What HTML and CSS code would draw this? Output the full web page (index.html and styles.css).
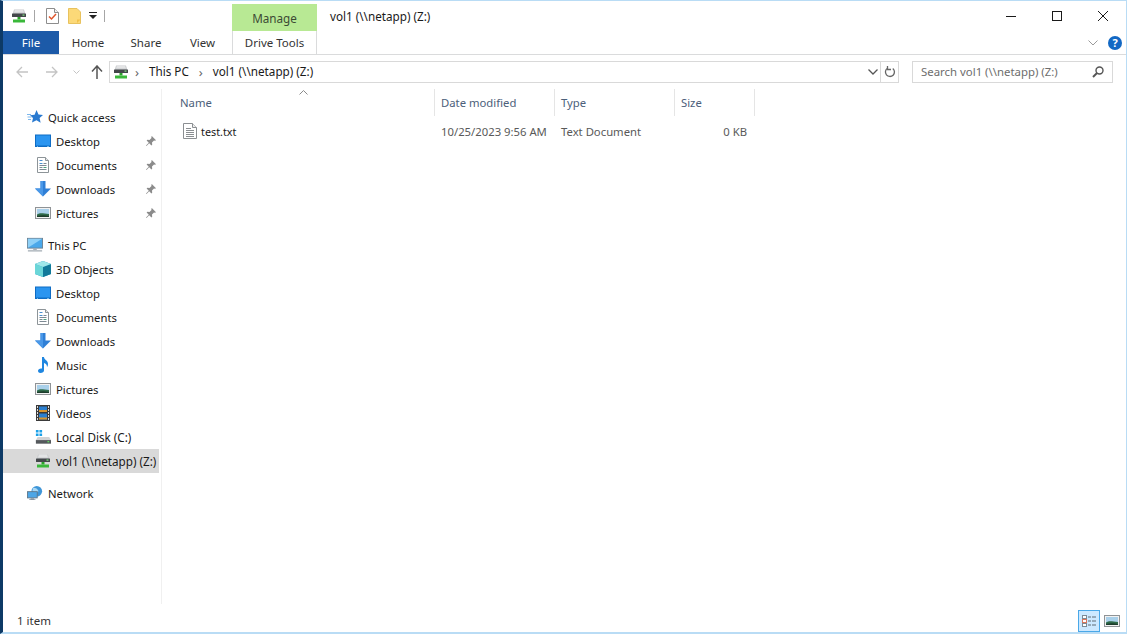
FILE: index.html
```html
<!DOCTYPE html>
<html lang="en">
<head>
<meta charset="utf-8">
<title>vol1 (\\netapp) (Z:)</title>
<link rel="stylesheet" href="styles.css">
</head>
<body>
<svg class="defs" width="0" height="0" aria-hidden="true">
  <symbol id="i-netdrive" viewBox="0 0 16 16">
    <path d="M3 1.500h10l1.500 5h-13z" fill="#c9cbcd"/>
    <path d="M4 1.500h8l1 3H3z" fill="#e3e4e5"/>
    <rect x="1" y="5.500" width="14" height="3.500" rx=".5" fill="#43474a"/>
    <rect x="11.500" y="6.500" width="2" height="1.200" fill="#7fe07f"/>
    <path d="M6.500 9h3v2.500h-3z" fill="#2aa12a"/>
    <path d="M2 11.500h12v3H2z" fill="#3ab83a"/>
  </symbol>
  <symbol id="i-desktop" viewBox="0 0 16 16">
    <rect x="0" y="1.500" width="16" height="12.500" fill="#0f6cc4"/>
    <rect x="1" y="2.500" width="14" height="10" fill="#2b95f0"/>
    <path d="M2 13h1v.6H2zm10 0h2v.6h-2z" fill="#dff"/>
  </symbol>
  <symbol id="i-doc" viewBox="0 0 16 16">
    <path d="M2.500.500h8l3 3v12h-11z" fill="#fff" stroke="#8d9498"/>
    <path d="M10.500.500v3h3" fill="#e6e8ea" stroke="#8d9498"/>
    <path d="M4.500 3.500h3M4.500 6.500h3" stroke="#4a8fce" stroke-width="1"/>
    <path d="M8.500 6.500h3M4.500 8.500h7M4.500 10.500h3M4.500 12.500h7" stroke="#7e8a94" stroke-width="1"/>
    <path d="M8.500 10.500h3" stroke="#4aa07c"/>
  </symbol>
  <symbol id="i-down" viewBox="0 0 16 16">
    <path d="M5.500 0h5v7.500H16L8 15.500 0 7.500h5.500z" fill="#2f7fd6"/>
    <path d="M5.500 0h2.500v15.500L0 7.500h5.500z" fill="#4a98e8"/>
  </symbol>
  <symbol id="i-pictures" viewBox="0 0 16 16">
    <rect x=".5" y="2.500" width="15" height="11" fill="#f2f2f2" stroke="#8f9396"/>
    <rect x="2" y="4" width="12" height="8" fill="#a9d0ea"/>
    <path d="M2 9.500c3-2 6-1 12-.5V12H2z" fill="#2f6a4a"/>
    <path d="M2 11c4-1 8-1 12 0v1H2z" fill="#1d3d2c"/>
  </symbol>
  <symbol id="i-pin" viewBox="0 0 12 12">
    <path d="M6.800 1 11 5.200l-1 .6-1-.2-2 2 .2 2.100-.8.800-2.200-2.300L1.500 11 1 10.500l2.800-2.700L1.600 5.500l.8-.8 2.100.2 2-2-.2-1z" fill="#8b8b8b"/>
  </symbol>
  <symbol id="i-star" viewBox="0 0 16 16">
    <path d="M9.500 1l2 4.600 4.500.4-3.400 3 1 4.800-4.100-2.500L5 13.500 6 9 3 6.200l4.600-.5z" fill="#2a7ad0"/>
    <path d="M0 5.500h4M.5 8h4M1 10.500h3" stroke="#7db7ec" stroke-width="1"/>
  </symbol>
  <symbol id="i-pc" viewBox="0 0 18 16">
    <rect x=".5" y=".5" width="17" height="11" fill="#4aa8ea" stroke="#6a7f90"/>
    <path d="M1 1h16L1 11z" fill="#8ed0f7"/>
    <rect x="7" y="12" width="4" height="1.500" fill="#9aa3aa"/>
    <rect x="1" y="13.500" width="16" height="2" fill="#b9c0c6"/>
  </symbol>
  <symbol id="i-3d" viewBox="0 0 16 16">
    <path d="M8 0l8 3v10l-8 3-8-3V3z" fill="#1f98b8"/>
    <path d="M0 3l8 3v10l-8-3z" fill="#6ad6d8"/>
    <path d="M8 6l8-3v10l-8 3z" fill="#127a9a"/>
    <path d="M8 0l8 3-8 3-8-3z" fill="#9fe8ea"/>
  </symbol>
  <symbol id="i-music" viewBox="0 0 16 16">
    <path d="M7 0h2c0 3 4 3 4 7 0 1.500-.5 2.500-1 3 .2-2.500-1.500-3.500-3-4v7.500C9 15 7.500 16 5.500 16S3 15 3 13.800C3 12.300 4.800 11 7 11.500z" fill="#1f86e0"/>
  </symbol>
  <symbol id="i-video" viewBox="0 0 14 16">
    <rect width="14" height="16" fill="#3a3a3a"/>
    <path d="M1 1h1v2H1zm0 3h1v2H1zm0 3h1v2H1zm0 3h1v2H1zm0 3h1v2H1zM12 1h1v2h-1zm0 3h1v2h-1zm0 3h1v2h-1zm0 3h1v2h-1zm0 3h1v2h-1z" fill="#ddd"/>
    <rect x="3" y="1.500" width="8" height="5.500" fill="#2b7fd0"/>
    <rect x="3" y="8.500" width="8" height="6" fill="#2b7fd0"/>
    <path d="M3 5h8v2H3zM3 12.500h8v2H3z" fill="#d9962e"/>
  </symbol>
  <symbol id="i-cdrive" viewBox="0 0 18 16">
    <path d="M1 0h3v3H1zm4 0h3v3H5zM1 4h3v3H1zm4 0h3v3H5z" fill="#1aa0e8"/>
    <path d="M3 8h13l2 3.500V13H1v-1.500z" fill="#d0d2d4"/>
    <rect x="1" y="11.500" width="17" height="4" fill="#55595c"/>
    <rect x="14" y="12.500" width="2" height="1.500" fill="#63d863"/>
  </symbol>
  <symbol id="i-network" viewBox="0 0 18 16">
    <circle cx="11" cy="6" r="6" fill="#3f96d8"/>
    <path d="M7 2c3 0 5 1 6 4l-3 2-4-2z" fill="#a9d8f5"/>
    <rect x=".5" y="6.500" width="11" height="7" fill="#4da6e6" stroke="#5f7688"/>
    <path d="M4 14h4v1H4zM2.500 15h7v1h-7z" fill="#8a98a4"/>
  </symbol>
  <symbol id="i-txt" viewBox="0 0 14 16">
    <path d="M.5.500h9l4 4v11H.5z" fill="#fff" stroke="#8b8f92"/>
    <path d="M9.500.500v4h4" fill="#eee" stroke="#8b8f92"/>
    <path d="M3 5.500h5M3 7.500h8M3 9.500h8M3 11.500h8M3 13.500h8" stroke="#8a8e91"/>
  </symbol>
</svg>

<div class="window">
  <header class="titlebar">
    <div class="qat">
      <svg class="ico ico-16"><use href="#i-netdrive"/></svg>
      <span class="qat-sep qat-sep-a"></span>
      <svg class="ico qat-prop" viewBox="0 0 13 16" width="13" height="16">
        <path d="M.5.500h8l4 4v11H.5z" fill="#fff" stroke="#8d8d8d"/>
        <path d="M8.500.500v4h4" fill="#f0f0f0" stroke="#8d8d8d"/>
        <path d="M3 8.500l2.500 2.500L10 6" fill="none" stroke="#e0562c" stroke-width="1.500"/>
      </svg>
      <svg class="ico qat-folder" viewBox="0 0 13 16" width="13" height="16">
        <path d="M.5.500h8.500l3.500 3.500v11.500H.5z" fill="#fcd978" stroke="#e8c25e"/>
        <path d="M9 15v-3.500h3.500" fill="#f2c24a"/>
      </svg>
      <svg class="ico qat-drop" viewBox="0 0 8 8" width="8" height="8">
        <path d="M0 0h8v1H0zM0 3h8L4 7z" fill="#222"/>
      </svg>
      <span class="qat-sep qat-sep-b"></span>
    </div>
    <div class="manage">Manage</div>
    <div class="title">vol1 (\\netapp) (Z:)</div>
    <div class="winctl">
      <button class="wbtn" aria-label="Minimize"><svg width="10" height="10" viewBox="0 0 10 10"><path d="M0 5.500h10" stroke="#1a1a1a"/></svg></button>
      <button class="wbtn" aria-label="Maximize"><svg width="10" height="10" viewBox="0 0 10 10"><rect x=".5" y=".5" width="9" height="9" fill="none" stroke="#1a1a1a"/></svg></button>
      <button class="wbtn" aria-label="Close"><svg width="10" height="10" viewBox="0 0 10 10"><path d="M0 0l10 10M10 0L0 10" stroke="#1a1a1a"/></svg></button>
    </div>
  </header>

  <nav class="tabs">
    <div class="tab tab-file">File</div>
    <div class="tab tab-home">Home</div>
    <div class="tab tab-share">Share</div>
    <div class="tab tab-view">View</div>
    <div class="tab tab-drive">Drive Tools</div>
    <div class="tabs-right">
      <svg width="10" height="6" viewBox="0 0 10 6"><path d="M.5.500L5 5 9.500.500" fill="none" stroke="#9a9a9a"/></svg>
      <span class="help">?</span>
    </div>
  </nav>

  <div class="addrrow">
    <div class="navbtns">
      <svg class="nav-back" width="12" height="12" viewBox="0 0 12 12"><path d="M6 1L1 6l5 5M1 6h11" fill="none" stroke="#c4c4c4" stroke-width="1.300"/></svg>
      <svg class="nav-fwd" width="12" height="12" viewBox="0 0 12 12"><path d="M6 1l5 5-5 5M11 6H0" fill="none" stroke="#c4c4c4" stroke-width="1.300"/></svg>
      <svg class="nav-recent" width="7" height="4" viewBox="0 0 7 4"><path d="M.5.500l3 3 3-3" fill="none" stroke="#c4c4c4"/></svg>
      <svg class="nav-up" width="12" height="14" viewBox="0 0 12 14"><path d="M1 6.500L6 1l5 5.500M6 1v13" fill="none" stroke="#555" stroke-width="1.500"/></svg>
    </div>
    <div class="addrbox">
      <svg class="ico ico-16"><use href="#i-netdrive"/></svg>
      <span class="crumb-sep">›</span>
      <span class="crumb">This PC</span>
      <span class="crumb-sep">›</span>
      <span class="crumb">vol1 (\\netapp) (Z:)</span>
      <span class="addr-fill"></span>
      <svg class="addr-chev" width="10" height="6" viewBox="0 0 10 6"><path d="M.5.500L5 5 9.500.500" fill="none" stroke="#555" stroke-width="1.300"/></svg>
      <span class="addr-div"></span>
      <svg class="addr-refresh" width="12" height="12" viewBox="0 0 12 12"><path d="M8.800 2.500A4.500 4.500 0 1 1 3.500 2.200" fill="none" stroke="#666" stroke-width="1.300"/><path d="M3.500 0v3.500H7" fill="none" stroke="#666" stroke-width="1.300"/></svg>
    </div>
    <div class="searchbox">
      <span class="search-text">Search vol1 (\\netapp) (Z:)</span>
      <svg width="12" height="12" viewBox="0 0 12 12"><circle cx="7.500" cy="4.500" r="3.500" fill="none" stroke="#555" stroke-width="1.400"/><path d="M5 7l-4 4" stroke="#555" stroke-width="2"/></svg>
    </div>
  </div>

  <main class="main">
    <aside class="side">
      <div class="group">
        <div class="row row-top"><svg class="ico ico-16"><use href="#i-star"/></svg><span>Quick access</span></div>
        <div class="row"><svg class="ico ico-16"><use href="#i-desktop"/></svg><span>Desktop</span><svg class="pin"><use href="#i-pin"/></svg></div>
        <div class="row"><svg class="ico ico-16"><use href="#i-doc"/></svg><span>Documents</span><svg class="pin"><use href="#i-pin"/></svg></div>
        <div class="row"><svg class="ico ico-16"><use href="#i-down"/></svg><span>Downloads</span><svg class="pin"><use href="#i-pin"/></svg></div>
        <div class="row"><svg class="ico ico-16"><use href="#i-pictures"/></svg><span>Pictures</span><svg class="pin"><use href="#i-pin"/></svg></div>
      </div>
      <div class="group">
        <div class="row row-top"><svg class="ico ico-16"><use href="#i-pc"/></svg><span>This PC</span></div>
        <div class="row"><svg class="ico ico-16"><use href="#i-3d"/></svg><span>3D Objects</span></div>
        <div class="row"><svg class="ico ico-16"><use href="#i-desktop"/></svg><span>Desktop</span></div>
        <div class="row"><svg class="ico ico-16"><use href="#i-doc"/></svg><span>Documents</span></div>
        <div class="row"><svg class="ico ico-16"><use href="#i-down"/></svg><span>Downloads</span></div>
        <div class="row"><svg class="ico ico-16"><use href="#i-music"/></svg><span>Music</span></div>
        <div class="row"><svg class="ico ico-16"><use href="#i-pictures"/></svg><span>Pictures</span></div>
        <div class="row"><svg class="ico ico-16"><use href="#i-video"/></svg><span>Videos</span></div>
        <div class="row row-wide"><svg class="ico ico-16"><use href="#i-cdrive"/></svg><span>Local Disk (C:)</span></div>
        <div class="row row-wide row-sel"><svg class="ico ico-16"><use href="#i-netdrive"/></svg><span>vol1 (\\netapp) (Z:)</span></div>
      </div>
      <div class="group">
        <div class="row row-top"><svg class="ico ico-16"><use href="#i-network"/></svg><span>Network</span></div>
      </div>
    </aside>
    <section class="files">
      <div class="fhead">
        <div class="col col-name">Name
          <svg class="sort" width="9" height="5" viewBox="0 0 9 5"><path d="M.5 4.500l4-4 4 4" fill="none" stroke="#8a8a8a"/></svg>
        </div>
        <div class="col">Date modified</div>
        <div class="col">Type</div>
        <div class="col">Size</div>
      </div>
      <div class="frow">
        <div class="cell cell-name"><svg class="ico txt"><use href="#i-txt"/></svg><span>test.txt</span></div>
        <div class="cell">10/25/2023 9:56 AM</div>
        <div class="cell">Text Document</div>
        <div class="cell cell-size">0 KB</div>
      </div>
    </section>
  </main>

  <footer class="status">
    <span class="count">1 item</span>
    <div class="views">
      <span class="view view-on"><svg width="18" height="16" viewBox="0 0 18 16">
        <rect x="2.500" y="2.500" width="4" height="3" fill="#fff" stroke="#7b8a96"/>
        <rect x="2.500" y="6.500" width="4" height="3" fill="#fff" stroke="#d9755b"/>
        <rect x="2.500" y="10.500" width="4" height="3" fill="#fff" stroke="#7b8a96"/>
        <path d="M8 4h3M12 4h4M8 8h3M12 8h4M8 12h3M12 12h4" stroke="#5f6b74"/>
      </svg></span>
      <span class="view"><svg width="16" height="16" viewBox="0 0 16 16"><use href="#i-pictures"/></svg></span>
    </div>
  </footer>
</div>
</body>
</html>
```

FILE: styles.css
```css
* { box-sizing: border-box; }
html, body { margin: 0; height: 100%; }
body {
  font-family: "Noto Sans", "Open Sans", "Liberation Sans", sans-serif;
  font-size: 11.5px;
  color: #1a1a1a;
  background: #fff;
  overflow: hidden;
}
.defs { position: absolute; }
svg { display: block; flex: none; }
.ico-16 { width: 16px; height: 16px; }

.window {
  height: 634px;
  display: flex;
  flex-direction: column;
  border-top: 1px solid #b9dcf5;
  border-right: 1px solid #b9dcf5;
  border-bottom: 2px solid #b9dcf5;
  border-left: 3px solid #0d3a66;
}

/* Title bar */
.titlebar { height: 30px; display: flex; align-items: flex-end; }
.qat { width: 229px; height: 30px; display: flex; align-items: center; padding-left: 8px; }
.qat-sep { width: 1px; height: 12px; background: #a6a6a6; }
.qat-sep-a { margin-left: 7px; }
.qat-sep-b { margin-left: 7px; }
.qat-prop { margin-left: 11px; }
.qat-folder { margin-left: 9px; }
.qat-drop { margin-left: 8px; }
.manage {
  width: 85px; height: 27px; background: #b8e994;
  display: flex; align-items: center; justify-content: center;
  color: #3c4a34;
  font-size: 11.7px;
}
.title { flex: 1; height: 30px; line-height: 30px; padding-left: 13px; font-size: 11.7px; }
.winctl { display: flex; height: 30px; }
.wbtn {
  width: 46px; height: 30px; border: 0; background: none; padding: 0;
  display: flex; align-items: center; justify-content: center;
}

/* Tabs */
.tabs {
  height: 24px; display: flex; align-items: stretch;
  border-bottom: 1px solid #dadbdc;
}
.tab { display: flex; align-items: center; justify-content: center; color: #333; }
.tab-file { width: 56px; background: #1c5aa8; color: #fff; }
.tab-home { width: 58px; }
.tab-share { width: 58px; }
.tab-view { width: 57px; padding-right: 2px; }
.tab-drive {
  width: 85px;
  border-left: 1px solid #dadbdc; border-right: 1px solid #dadbdc;
}
.tabs-right { flex: 1; display: flex; align-items: center; justify-content: flex-end; gap: 10px; padding-right: 4px; }
.help {
  width: 14px; height: 14px; border-radius: 50%; background: #1268c4; color: #fff;
  font-size: 11px; font-weight: 700; line-height: 14px; text-align: center;
}

/* Address */
.addrrow { height: 34px; display: flex; align-items: center; }
.navbtns { width: 106px; display: flex; align-items: center; padding-left: 13px; }
.nav-fwd { margin-left: 18px; }
.nav-recent { margin-left: 15px; }
.nav-up { margin-left: 11px; }
.addrbox {
  width: 790px; height: 22px; border: 1px solid #d9d9d9;
  display: flex; align-items: center; padding-left: 3px;
}
.crumb-sep { width: 16px; margin-right: 4px; text-align: center; color: #666; font-size: 13px; line-height: 16px; }
.crumb { color: #1a1a1a; margin: 0 4px 2px 0; font-size: 11.7px; }
.addr-fill { flex: 1; }
.addr-chev { margin-right: 2px; }
.addr-div { width: 1px; height: 20px; background: #d9d9d9; }
.addr-refresh { margin: 0 2px 0 3px; }
.searchbox {
  width: 201px; height: 22px; margin-left: 13px; border: 1px solid #d9d9d9;
  display: flex; align-items: center; justify-content: space-between; padding: 0 8px;
  color: #6d6d6d; font-size: 11.4px;
}
.search-text { margin-bottom: 2px; }

/* Main */
.main { flex: 1; display: flex; min-height: 0; }
.side { width: 159px; border-right: 1px solid #f0f0f0; display: flex; flex-direction: column; gap: 8px; padding-top: 16px; font-size: 11.3px; }
.row { height: 24px; display: flex; align-items: center; padding-left: 32px; gap: 5px; position: relative; margin-right: 2px; }
.row span { white-space: nowrap; }
.row-top { padding-left: 24px; }
.row-wide { font-size: 11.7px; }
.row-sel { background: #d9d9d9; }
.pin { width: 12px; height: 12px; position: absolute; right: 2px; top: 6px; }

.files { flex: 1; padding-left: 12px; font-size: 11.3px; }
.fhead, .frow { display: grid; grid-template-columns: 261px 120px 120px 80px; }
.fhead { height: 27px; }
.col {
  border-right: 1px solid #e5e5e5; padding-left: 6px; color: #4c607a;
  display: flex; align-items: center; position: relative;
}
.sort { position: absolute; left: 125px; top: 1px; }
.frow { height: 22px; margin-top: 4px; align-items: center; color: #595959; }
.cell { padding-left: 6px; white-space: nowrap; }
.cell-name { display: flex; align-items: center; gap: 4px; color: #1a1a1a; padding-left: 9px; font-size: 10.8px; }
.txt { width: 14px; height: 16px; }
.cell-size { text-align: right; padding-right: 8px; }

/* Status */
.status { height: 28px; display: flex; align-items: flex-end; justify-content: space-between; padding: 0 3px 0 14px; color: #333; }
.count { line-height: 22px; }
.views { display: flex; align-items: center; gap: 1px; }
.view { width: 22px; height: 22px; display: flex; align-items: center; justify-content: center; }
.view-on { background: #cce8ff; border: 1px solid #4aa8e8; }
```
